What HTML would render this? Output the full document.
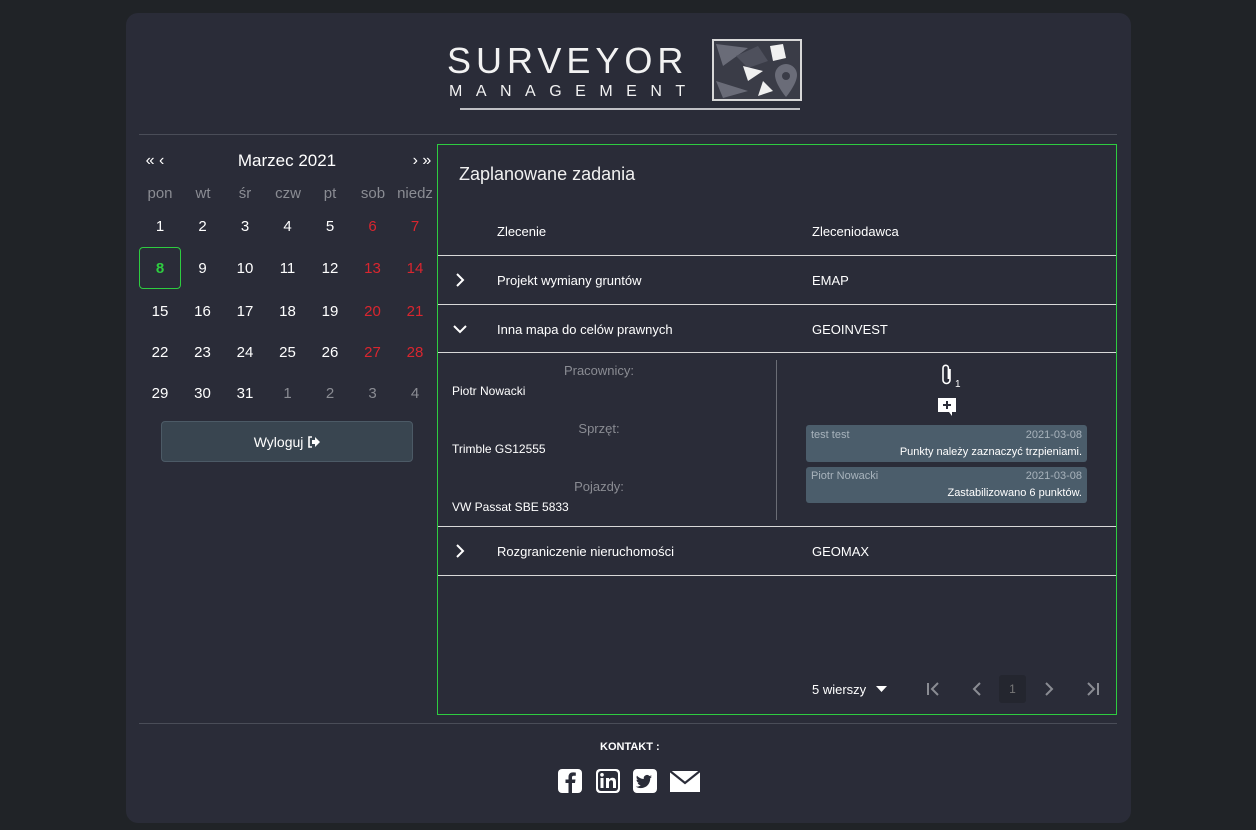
<!DOCTYPE html>
<html><head><meta charset="utf-8"><style>
*{margin:0;padding:0;box-sizing:border-box}
body{width:1256px;height:830px;background:#202327;font-family:"Liberation Sans",sans-serif;color:#fff;position:relative;overflow:hidden}
.card{position:absolute;left:126px;top:13px;width:1005px;height:810px;background:#2a2c38;border-radius:12px}
.a{position:absolute}
.hr{position:absolute;height:1px;background:#4a4d58}
.cal span{position:absolute;width:42px;text-align:center;font-size:15px;white-space:nowrap}
.dn{color:#8a8c93;font-size:14px}
.red{color:#d9262f}
.gray{color:#8a8c93}
.tl{position:absolute;left:438px;width:678px;height:1px;background:#d8d8d8}
.tx{position:absolute;font-size:13px}
.lbl{position:absolute;color:#8a8c93;font-size:13px;width:200px;text-align:center}
.cm{position:absolute;left:806px;width:281px;background:#4b5d6b;border-radius:3px;font-size:11px}
</style></head><body>
<div class="card"></div>
<!-- logo -->
<div class="a" style="left:447px;top:40px;font-size:36px;letter-spacing:5px;color:#f2f2f2;white-space:nowrap">SURVEYOR</div>
<div class="a" style="left:449px;top:83px;font-size:16px;letter-spacing:13.5px;color:#f2f2f2;white-space:nowrap">MANAGEMENT</div>
<div class="a" style="left:460px;top:108px;width:340px;height:2px;background:#bfc0c4"></div>
<svg class="a" style="left:708px;top:36px" width="100" height="70" viewBox="0 0 100 70">
<rect x="5" y="4" width="88" height="60" fill="#3a3c47" stroke="#d8d8d8" stroke-width="2"/>
<polygon points="8,8 40,12 15,30" fill="#6a6c78"/>
<polygon points="28,20 50,10 60,25 40,32" fill="#4e505c"/>
<polygon points="62,10 75,8 78,22 65,25" fill="#f0f0f0"/>
<polygon points="35,30 55,35 40,45" fill="#f0f0f0"/>
<polygon points="8,45 40,55 15,62" fill="#6a6c78"/>
<polygon points="55,45 65,55 50,60" fill="#f0f0f0"/>
<path d="M78 28a11 11 0 0 1 11 11c0 9-11 22-11 22s-11-13-11-22a11 11 0 0 1 11-11z" fill="#6a6c78"/>
<circle cx="78" cy="40" r="4" fill="#3a3c47"/>
</svg>
<div class="hr" style="left:139px;top:134px;width:978px"></div>
<div class="hr" style="left:139px;top:723px;width:978px"></div>
<!-- calendar -->
<div class="cal">
<span style="left:134px;top:152px;font-size:16px">«&nbsp;‹</span>
<span style="left:222px;top:151px;width:130px;font-size:17px">Marzec 2021</span>
<span style="left:401px;top:152px;font-size:16px">›&nbsp;»</span>
<span class="dn" style="left:139px;top:185px">pon</span><span class="dn" style="left:182px;top:185px">wt</span><span class="dn" style="left:224px;top:185px">śr</span><span class="dn" style="left:267px;top:185px">czw</span><span class="dn" style="left:309px;top:185px">pt</span><span class="dn" style="left:352px;top:185px">sob</span><span class="dn" style="left:394px;top:185px">niedz</span>
</div>
<div class="a" style="left:139px;top:247px;width:42px;height:42px;border:1px solid #2ecc40;border-radius:4px"></div>
<div class="cal" id="days"></div>
<div class="a" style="left:161px;top:421px;width:252px;height:41px;background:#394550;border:1px solid #4c5a66;border-radius:4px;text-align:center;line-height:40px;font-size:14px">Wyloguj <svg width="13" height="12" viewBox="0 0 13 12" style="vertical-align:-1px"><path d="M5 1H2v10h3" stroke="#fff" stroke-width="1.6" fill="none"/><path d="M5 4h3V1l5 5-5 5V8H5z" fill="#fff"/></svg></div>
<!-- table -->
<div class="a" style="left:437px;top:144px;width:680px;height:571px;border:1px solid #2ecc40"></div>
<div class="a" style="left:459px;top:164px;font-size:18px;color:#f0f0f0">Zaplanowane zadania</div>
<div class="tx" style="left:497px;top:224px">Zlecenie</div><div class="tx" style="left:812px;top:224px">Zleceniodawca</div>
<div class="tl" style="top:255px"></div>
<svg class="a" style="left:455px;top:273px" width="10" height="14"><path d="M2 1l6 6-6 6" stroke="#fff" stroke-width="2" fill="none"/></svg>
<div class="tx" style="left:497px;top:273px">Projekt wymiany gruntów</div><div class="tx" style="left:812px;top:273px">EMAP</div>
<div class="tl" style="top:304px"></div>
<svg class="a" style="left:453px;top:324px" width="14" height="10"><path d="M1 2l6 6 6-6" stroke="#fff" stroke-width="2" fill="none"/></svg>
<div class="tx" style="left:497px;top:322px">Inna mapa do celów prawnych</div><div class="tx" style="left:812px;top:322px">GEOINVEST</div>
<div class="tl" style="top:352px"></div>
<div class="lbl" style="left:499px;top:363px">Pracownicy:</div>
<div class="tx" style="left:452px;top:384px;font-size:12px">Piotr Nowacki</div>
<div class="lbl" style="left:499px;top:421px">Sprzęt:</div>
<div class="tx" style="left:452px;top:442px;font-size:12px">Trimble GS12555</div>
<div class="lbl" style="left:499px;top:479px">Pojazdy:</div>
<div class="tx" style="left:452px;top:500px;font-size:12px">VW Passat SBE 5833</div>
<div class="a" style="left:776px;top:360px;width:1px;height:160px;background:#6a6d75"></div>
<svg class="a" style="left:941px;top:364px" width="12" height="22" viewBox="0 0 12 22"><path d="M9 5v11a3.5 3.5 0 0 1-7 0V4a2.7 2.7 0 0 1 5.4 0v11" stroke="#fff" stroke-width="1.6" fill="none"/></svg>
<div class="a" style="left:955px;top:379px;font-size:10px">1</div>
<svg class="a" style="left:937px;top:397px" width="20" height="20" viewBox="0 0 20 20"><path d="M1 1h18v14h-4v4l-3-4H1z" fill="#fff"/><path d="M10 4v8M6 8h8" stroke="#2a2c38" stroke-width="2"/></svg>
<div class="cm" style="top:425px;height:37px"><span class="a" style="left:5px;top:4px;color:#a8b3bc">test test</span><span class="a" style="right:5px;top:4px;color:#a8b3bc">2021-03-08</span><span class="a" style="right:5px;top:21px">Punkty należy zaznaczyć trzpieniami.</span></div>
<div class="cm" style="top:467px;height:36px"><span class="a" style="left:5px;top:3px;color:#a8b3bc">Piotr Nowacki</span><span class="a" style="right:5px;top:3px;color:#a8b3bc">2021-03-08</span><span class="a" style="right:5px;top:20px">Zastabilizowano 6 punktów.</span></div>
<div class="tl" style="top:526px"></div>
<svg class="a" style="left:455px;top:544px" width="10" height="14"><path d="M2 1l6 6-6 6" stroke="#fff" stroke-width="2" fill="none"/></svg>
<div class="tx" style="left:497px;top:544px">Rozgraniczenie nieruchomości</div><div class="tx" style="left:812px;top:544px">GEOMAX</div>
<div class="tl" style="top:575px"></div>
<div class="tx" style="left:812px;top:682px">5 wierszy</div>
<svg class="a" style="left:876px;top:686px" width="11" height="6"><path d="M0 0h11L5.5 6z" fill="#fff"/></svg>
<svg class="a" style="left:926px;top:682px" width="14" height="14"><path d="M2 1v12M12 1l-6 6 6 6" stroke="#8a8c93" stroke-width="2" fill="none"/></svg>
<svg class="a" style="left:972px;top:682px" width="10" height="14"><path d="M8 1l-6 6 6 6" stroke="#8a8c93" stroke-width="2" fill="none"/></svg>
<div class="a" style="left:999px;top:675px;width:27px;height:28px;background:#24262f;border-radius:3px;color:#777;font-size:12px;text-align:center;line-height:28px">1</div>
<svg class="a" style="left:1044px;top:682px" width="10" height="14"><path d="M2 1l6 6-6 6" stroke="#8a8c93" stroke-width="2" fill="none"/></svg>
<svg class="a" style="left:1086px;top:682px" width="14" height="14"><path d="M12 1v12M2 1l6 6-6 6" stroke="#8a8c93" stroke-width="2" fill="none"/></svg>
<!-- footer -->
<div class="a" style="left:600px;top:741px;font-size:11px;font-weight:bold">KONTAKT :</div>
<svg class="a" style="left:558px;top:768px" width="142" height="26" viewBox="0 0 142 26">
<rect x="0" y="1" width="24" height="24" rx="4" fill="#fff"/><path d="M14 25V15h3l.5-3.5H14V9.5c0-1 .4-1.7 1.8-1.7h2V4.6c-.4 0-1.5-.2-2.8-.2-2.7 0-4.5 1.6-4.5 4.6v2.5H7.5V15h3v10z" fill="#2a2c38"/>
<rect x="38" y="1" width="24" height="24" rx="4" fill="#fff"/><rect x="40" y="3" width="20" height="20" rx="3" fill="#2a2c38"/><rect x="42.5" y="10" width="3" height="10" fill="#fff"/><circle cx="44" cy="6.8" r="1.8" fill="#fff"/><path d="M48 10h3v1.5c.8-1.2 2-1.8 3.5-1.8 2.5 0 3.5 1.6 3.5 4.3V20h-3v-5.5c0-1.3-.4-2.2-1.6-2.2-1.3 0-2.4.9-2.4 2.5V20h-3z" fill="#fff"/>
<rect x="75" y="1" width="24" height="24" rx="4" fill="#fff"/><path d="M94 8.5c-.6.3-1.2.4-1.9.5.7-.4 1.2-1 1.4-1.8-.6.4-1.3.6-2.1.8a3.3 3.3 0 0 0-5.6 3c-2.7-.1-5.2-1.4-6.8-3.4-.9 1.5-.4 3.4 1 4.4-.5 0-1-.2-1.5-.4 0 1.6 1.1 3 2.6 3.2-.5.1-1 .2-1.5.1.4 1.3 1.7 2.3 3.1 2.3-1.4 1.1-3.2 1.6-4.9 1.4 1.5.9 3.2 1.5 5.1 1.5 6.1 0 9.5-5.1 9.300-9.800.6-.4 1.2-1 1.6-1.6z" fill="#2a2c38"/>
<path d="M112 3h30v21h-30z" fill="#fff"/><path d="M112 3l15 12 15-12" stroke="#2a2c38" stroke-width="2.2" fill="none"/>
</svg>
<script>
var rows=[[1,2,3,4,5,6,7],[8,9,10,11,12,13,14],[15,16,17,18,19,20,21],[22,23,24,25,26,27,28],[29,30,31,1,2,3,4]];
var ys=[218,260,303,344,385],h='';
rows.forEach(function(r,i){r.forEach(function(d,j){var c='';if(j>=5)c='red';if(i==4&&j>=3)c='gray';var st='';if(i==1&&j==0)st='color:#2ecc40;font-weight:bold;';h+='<span class="'+c+'" style="'+st+'left:'+(139+j*42.5)+'px;top:'+ys[i]+'px">'+d+'</span>';});});
document.getElementById('days').innerHTML=h;
</script>
</body></html>
